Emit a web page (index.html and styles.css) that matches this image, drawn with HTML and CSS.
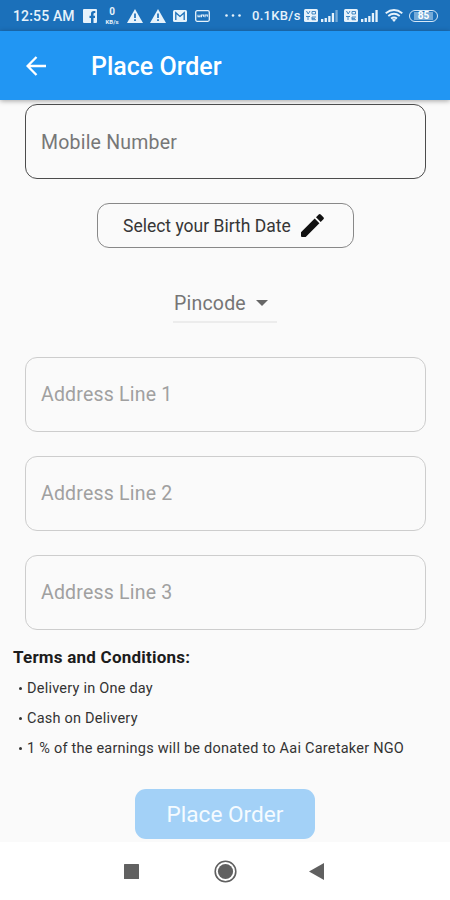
FILE: index.html
```html
<!DOCTYPE html>
<html lang="en">
<head>
<meta charset="utf-8">
<title>Place Order</title>
<link rel="stylesheet" href="styles.css">
</head>
<body>
<div class="status">
  <span class="time">12:55 AM</span>
  <svg class="facebook" width="14" height="14" viewBox="0 0 14 14"><path fill="#e6f2fb" fill-rule="evenodd" d="M1 0h12q1 0 1 1v12q0 1-1 1h-2.500V9H12V6.700h-1.500V5q0-1 1-1h.8V2h-1.500Q8 2 8 4.500v2.200H6.500V9H8v5H1q-1 0-1-1V1q0-1 1-1z"/></svg>
  <span class="rate"><b>0</b><small>KB/s</small></span>
  <svg class="warning" width="16" height="14" viewBox="0 0 16 14"><path fill="#e6f2fb" d="M8 0l8 14H0z"/><path stroke="#1b6fb9" stroke-width="1.700" d="M8 4.500V9M8 10.300V12"/></svg>
  <svg class="warning" width="16" height="14" viewBox="0 0 16 14"><path fill="#e6f2fb" d="M8 0l8 14H0z"/><path stroke="#1b6fb9" stroke-width="1.700" d="M8 4.500V9M8 10.300V12"/></svg>
  <svg class="mail" width="14" height="12" viewBox="0 0 14 12"><rect width="14" height="12" rx="1.500" fill="#e6f2fb"/><path fill="none" stroke="#1b6fb9" stroke-width="1.300" d="M2.800 10V2.800L7 6.500l4.200-3.700V10"/></svg>
  <svg class="card" width="15" height="12" viewBox="0 0 15 12"><rect x=".7" y=".7" width="13.600" height="10.600" rx="1.500" fill="none" stroke="#e6f2fb" stroke-width="1.300"/><path fill="none" stroke="#e6f2fb" stroke-width="1.100" d="M3 4.700v2h2v-2m1.500 2.500V5h2v1.700m1.500.5V5h2.300v1.700"/></svg>
  <svg class="dots" width="16" height="3" viewBox="0 0 16 3"><g fill="#e6f2fb"><circle cx="1.500" cy="1.500" r="1.300"/><circle cx="8" cy="1.500" r="1.300"/><circle cx="14.500" cy="1.500" r="1.300"/></g></svg>
  <span class="speed">0.1KB/s</span>
  <svg class="volte" width="14" height="13" viewBox="0 0 14 13"><rect width="14" height="13" rx="1.500" fill="#e6f2fb"/><path fill="none" stroke="#3f86c3" d="M2.500 2l1.700 3L6 2m2 .5h3.500V5H8zM2 7.500h4M4 7.500V11M12 8H8v2.700h4M8 9.400h3"/></svg>
  <svg class="signal" width="17" height="12" viewBox="0 0 17 12"><g fill="#e6f2fb"><path d="M0 9h2.300v3H0zM3.600 8h2.300v4H3.600zM7.200 6h2.300v6H7.200zM10.800 3h2.300v9h-2.300z"/><path opacity=".45" d="M14.400 0h2.300v12h-2.300z"/></g></svg>
  <svg class="volte second" width="14" height="13" viewBox="0 0 14 13"><rect width="14" height="13" rx="1.500" fill="#e6f2fb"/><path fill="none" stroke="#3f86c3" d="M2.500 2l1.700 3L6 2m2 .5h3.500V5H8zM2 7.500h4M4 7.500V11M12 8H8v2.700h4M8 9.400h3"/></svg>
  <svg class="signal" width="17" height="12" viewBox="0 0 17 12"><path fill="#e6f2fb" d="M0 9h2.300v3H0zM3.600 8h2.300v4H3.600zM7.200 6h2.300v6H7.200zM10.800 3h2.300v9h-2.300zM14.400 0h2.300v12h-2.300z"/></svg>
  <svg class="wifi" width="18" height="13" viewBox="0 0 18 13"><g fill="none" stroke="#e6f2fb" stroke-width="1.800"><path d="M.7 4.300q8.300-6.500 16.600 0M3.300 7q5.700-4.500 11.400 0M6 9.600q3-2.200 6 0"/></g><path fill="#e6f2fb" d="M6.800 10.600q2.200-1.200 4.400 0L9 13z"/></svg>
  <span class="battery"><span>85</span></span>
</div>
<header class="appbar">
  <svg width="20" height="20" viewBox="0 0 20 20"><path fill="none" stroke="#fff" stroke-width="2.300" d="M20 10H2M10.500 1L1.600 10l8.900 9"/></svg>
  <h1>Place Order</h1>
</header>
<main>
  <div class="field active"><span>Mobile Number</span></div>
  <div class="birth"><span>Select your Birth Date</span>
    <svg width="23" height="23" viewBox="0 0 23 23"><path fill="#111" d="M0 18.300L13.700 4.600l4.700 4.700L4.700 23H1q-1 0-1-1zM15 3.300L17.700.6q1-1 2 0l2.700 2.700q1 1 0 2L19.700 8z"/></svg>
  </div>
  <div class="pincode"><span>Pincode</span><svg width="12" height="6" viewBox="0 0 12 6"><path fill="#666" d="M0 0h12L6 6z"/></svg></div>
  <div class="addresses">
    <div class="field"><span>Address Line 1</span></div>
    <div class="field"><span>Address Line 2</span></div>
    <div class="field"><span>Address Line 3</span></div>
  </div>
  <section class="terms">
    <h2>Terms and Conditions:</h2>
    <p><i></i><span>Delivery in One day</span></p>
    <p><i></i><span>Cash on Delivery</span></p>
    <p><i></i><span>1 % of the earnings will be donated to Aai Caretaker NGO</span></p>
  </section>
  <div class="submit">Place Order</div>
</main>
<nav>
  <svg width="15" height="15" viewBox="0 0 15 15"><rect width="15" height="15" rx=".5" fill="#616161"/></svg>
  <svg class="home" width="23" height="23" viewBox="0 0 23 23"><circle cx="11.500" cy="11.500" r="10.300" fill="none" stroke="#606060" stroke-width="1.600"/><circle cx="11.500" cy="11.500" r="7.600" fill="#606060"/></svg>
  <svg class="back" width="15" height="17" viewBox="0 0 15 17"><path fill="#606060" d="M15 0v17L0 8.500z"/></svg>
</nav>
</body>
</html>
```

FILE: styles.css
```css
* { box-sizing: border-box; }
body {
  margin: 0;
  width: 450px;
  height: 900px;
  overflow: hidden;
  display: flex;
  flex-direction: column;
  background: #fafafa;
  font-family: Roboto, sans-serif;
  white-space: nowrap;
}
svg { display: block; flex: none; }
.status {
  height: 31px;
  flex: none;
  display: flex;
  align-items: center;
  background: #1b70ba;
  color: #e6f2fb;
}
.status > * { flex: none; }
.time { margin-left: 13px; width: 62px; font-size: 14px; font-weight: 500; letter-spacing: .15px; }
.facebook { margin-left: 8px; }
.rate { margin-left: 7px; width: 16px; display: flex; flex-direction: column; align-items: center; }
.rate b { font-size: 10px; line-height: 12px; }
.rate small { font-size: 6px; line-height: 8px; font-weight: 700; }
.warning { margin-left: 7px; }
.mail { margin-left: 7px; }
.card { margin-left: 8px; }
.dots { margin-left: 15px; }
.speed { margin-left: 11px; width: 50px; font-size: 13px; font-weight: 500; letter-spacing: .3px; }
.volte { margin-left: 2px; }
.volte.second { margin-left: 6px; }
.signal { margin-left: 3px; }
.wifi { margin-left: 7px; }
.battery {
  margin-left: 6px;
  width: 29px;
  height: 12px;
  padding: 1px 4px;
  border: 1.5px solid #d6e8f7;
  border-radius: 6px;
  display: flex;
}
.battery span {
  flex: 1;
  background: #76abd8;
  color: #fff;
  font-size: 10px;
  font-weight: 700;
  line-height: 8px;
  text-align: center;
}
.appbar {
  height: 69px;
  flex: none;
  display: flex;
  align-items: center;
  padding-left: 26px;
  background: #2196f3;
  color: #fff;
  box-shadow: 0 1px 5px rgba(0, 0, 0, .35);
}
h1 { margin: 2px 0 0 45px; font-size: 25px; line-height: 30px; font-weight: 500; }
main { height: 742px; flex: none; display: flex; flex-direction: column; padding-top: 4px; }
.field {
  height: 75px;
  flex: none;
  margin: 0 24px 0 25px;
  padding-left: 15px;
  border: 1px solid #cdcdcd;
  border-radius: 12px;
  display: flex;
  align-items: center;
  font-size: 19.5px;
  letter-spacing: .2px;
  color: #a0a0a0;
}
.field.active { border-color: #4c4c4c; color: #777; padding-top: 1px; }
.birth {
  width: 257px;
  height: 45px;
  flex: none;
  margin: 24px 0 0 97px;
  padding-left: 25px;
  border: 1px solid #888;
  border-radius: 12px;
  display: flex;
  align-items: center;
  font-size: 17.5px;
  color: #363636;
}
.birth span { width: 169px; }
.birth svg { margin-left: 9px; }
.pincode {
  width: 104px;
  height: 43px;
  flex: none;
  margin: 32px 0 0 173px;
  padding: 5px 0 0 1px;
  border-bottom: 2px solid #ececec;
  display: flex;
  align-items: center;
  font-size: 19.5px;
  letter-spacing: .2px;
  color: #757575;
}
.pincode span { width: 82px; }
.addresses { display: flex; flex-direction: column; gap: 24px; margin-top: 34px; }
.terms { margin: 16px 0 0 13px; color: #333; }
h2 { margin: 0 0 5px; font-size: 17px; line-height: 22px; font-weight: 700; letter-spacing: .23px; color: #1c1c1c; }
.terms p { display: flex; align-items: center; height: 30px; margin: 0; font-size: 14.5px; letter-spacing: .23px; }
.terms i { width: 3px; height: 3px; margin: 0 5px 0 6px; border-radius: 50%; background: #333; }
.submit {
  width: 180px;
  height: 50px;
  flex: none;
  margin: 26px 0 0 135px;
  border-radius: 11px;
  background: #a3d1f7;
  color: #f5fbff;
  display: flex;
  align-items: center;
  justify-content: center;
  font-size: 22.6px;
}
nav { height: 58px; display: flex; align-items: center; padding-left: 124px; background: #fff; }
.home { margin-left: 75px; }
.back { margin-left: 72px; }
```
